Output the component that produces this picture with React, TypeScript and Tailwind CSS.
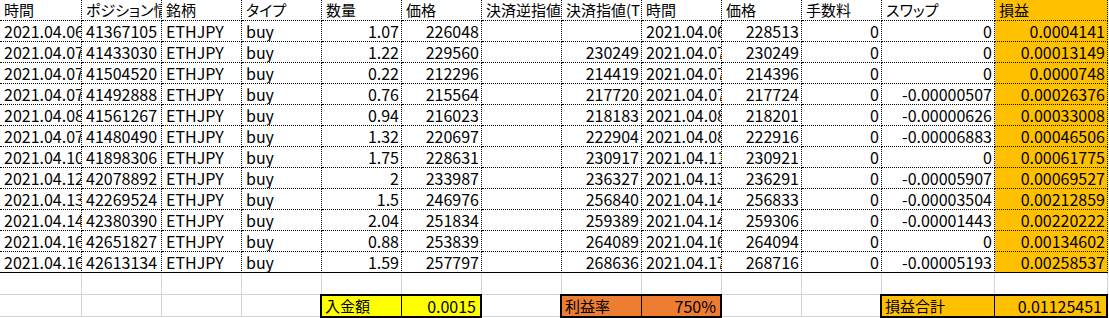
import React from "react";

const headers = [
  "時間",
  "ポジション情報",
  "銘柄",
  "タイプ",
  "数量",
  "価格",
  "決済逆指値",
  "決済指値(TP)",
  "時間",
  "価格",
  "手数料",
  "スワップ",
  "損益",
];

// columns that are left aligned (text cells)
const leftCols = [0, 1, 2, 3, 8];

const rows = [
  ["2021.04.06", "41367105", "ETHJPY", "buy", "1.07", "226048", "", "", "2021.04.06", "228513", "0", "0", "0.0004141"],
  ["2021.04.07", "41433030", "ETHJPY", "buy", "1.22", "229560", "", "230249", "2021.04.07", "230249", "0", "0", "0.00013149"],
  ["2021.04.07", "41504520", "ETHJPY", "buy", "0.22", "212296", "", "214419", "2021.04.07", "214396", "0", "0", "0.0000748"],
  ["2021.04.07", "41492888", "ETHJPY", "buy", "0.76", "215564", "", "217720", "2021.04.07", "217724", "0", "-0.00000507", "0.00026376"],
  ["2021.04.08", "41561267", "ETHJPY", "buy", "0.94", "216023", "", "218183", "2021.04.08", "218201", "0", "-0.00000626", "0.00033008"],
  ["2021.04.07", "41480490", "ETHJPY", "buy", "1.32", "220697", "", "222904", "2021.04.08", "222916", "0", "-0.00006883", "0.00046506"],
  ["2021.04.10", "41898306", "ETHJPY", "buy", "1.75", "228631", "", "230917", "2021.04.11", "230921", "0", "0", "0.00061775"],
  ["2021.04.12", "42078892", "ETHJPY", "buy", "2", "233987", "", "236327", "2021.04.13", "236291", "0", "-0.00005907", "0.00069527"],
  ["2021.04.13", "42269524", "ETHJPY", "buy", "1.5", "246976", "", "256840", "2021.04.14", "256833", "0", "-0.00003504", "0.00212859"],
  ["2021.04.14", "42380390", "ETHJPY", "buy", "2.04", "251834", "", "259389", "2021.04.14", "259306", "0", "-0.00001443", "0.00220222"],
  ["2021.04.16", "42651827", "ETHJPY", "buy", "0.88", "253839", "", "264089", "2021.04.16", "264094", "0", "0", "0.00134602"],
  ["2021.04.16", "42613134", "ETHJPY", "buy", "1.59", "257797", "", "268636", "2021.04.17", "268716", "0", "-0.00005193", "0.00258537"],
];

const GridCell = () => <div className="h-[22px] border-r border-b border-[#d4d4d4]" />;

const SumBox = ({ label, value, bg, labelW }: { label: string; value: string; bg: string; labelW: string }) => (
  <div className={`col-span-2 -ml-[2px] -mt-px w-[calc(100%+2px)] h-[24px] flex border-2 border-black ${bg}`}>
    <div className={`${labelW} shrink-0 border-r border-black pl-[3px] text-[15px] leading-[20px] whitespace-nowrap overflow-hidden`}>
      {label}
    </div>
    <div className="flex-1 text-right pr-[4px] text-[16px] leading-[20px] whitespace-nowrap overflow-hidden">{value}</div>
  </div>
);

export default function App() {
  return (
    <div className="w-[1109px] h-[318px] overflow-hidden bg-white text-black font-['Noto_Sans_CJK_JP',sans-serif] [font-feature-settings:'palt']">
      <div className="grid grid-cols-[82px_repeat(10,80px)_113px_113px]">
        {headers.map((h, i) => (
          <div
            key={"h" + i}
            className={`h-[21px] leading-[20px] text-[15px] pl-[4px] border-r border-b border-dotted border-black overflow-hidden whitespace-nowrap ${
              i === 12 ? "bg-[#ffc000]" : ""
            }`}
          >
            {h}
          </div>
        ))}

        {rows.map((r, ri) =>
          r.map((v, ci) => (
            <div
              key={ri + "-" + ci}
              className={`h-[21px] leading-[20px] text-[16px] border-r border-b border-dotted border-black overflow-hidden whitespace-nowrap ${
                leftCols.includes(ci) ? "pl-[4px]" : "text-right pr-[2px]"
              } ${ci === 12 ? "bg-[#ffc000]" : ""} ${ri === rows.length - 1 ? "[border-bottom-style:solid]" : ""}`}
            >
              {v}
            </div>
          ))
        )}

        {/* empty row */}
        {headers.map((_, i) => (
          <GridCell key={"e" + i} />
        ))}

        {/* summary row */}
        <GridCell />
        <GridCell />
        <GridCell />
        <GridCell />
        <SumBox label="入金額" value="0.0015" bg="bg-[#ffff00]" labelW="w-[80px]" />
        <GridCell />
        <SumBox label="利益率" value="750%" bg="bg-[#ed7d31]" labelW="w-[80px]" />
        <GridCell />
        <GridCell />
        <SumBox label="損益合計" value="0.01125451" bg="bg-[#ffc000]" labelW="w-[113px]" />
      </div>
    </div>
  );
}
